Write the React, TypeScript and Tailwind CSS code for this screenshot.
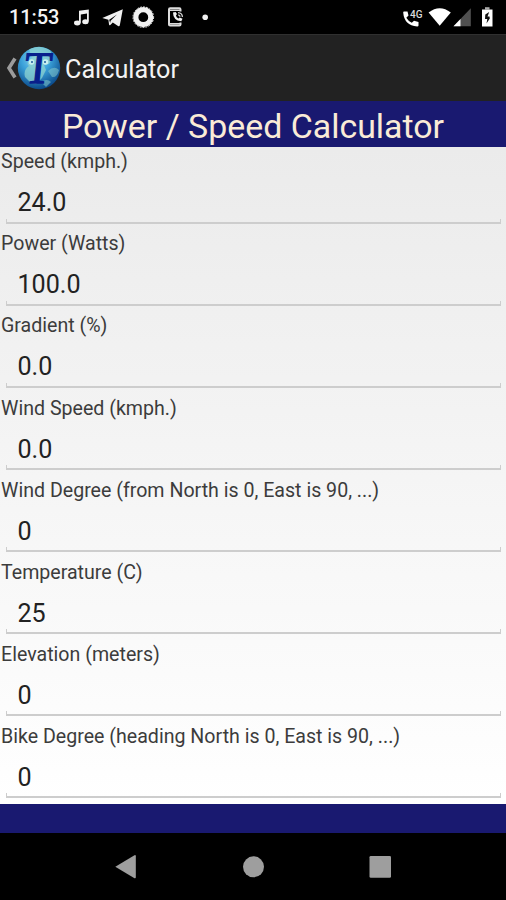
interface FieldProps {
    label: string;
    value: string;
}

const fields: FieldProps[] = [
    { label: "Speed (kmph.)", value: "24.0" },
    { label: "Power (Watts)", value: "100.0" },
    { label: "Gradient (%)", value: "0.0" },
    { label: "Wind Speed (kmph.)", value: "0.0" },
    { label: "Wind Degree (from North is 0, East is 90, ...)", value: "0" },
    { label: "Temperature (C)", value: "25" },
    { label: "Elevation (meters)", value: "0" },
    { label: "Bike Degree (heading North is 0, East is 90, ...)", value: "0" },
];

function StatusBar() {
    return (
        <div className="flex h-[34px] shrink-0 items-center bg-black text-[#f4f4f4]">
            <span className="w-[73px] pl-[9px] text-[20px] leading-[36px] font-medium tracking-[-0.1px]">11:53</span>

            {/* Notifications */}
            <svg className="h-[34px] w-[147px]" viewBox="73 0 147 34" fill="#f1f1f1">
                {/* Music */}
                <path d="M79 10.8L88.8 9.6V21.5H87V13.6L80.8 14.4V22.8H79Z" />
                <ellipse cx="77.3" cy="23" rx="3.3" ry="2.4" />
                <ellipse cx="85.4" cy="21.7" rx="3.2" ry="2.5" />
                {/* Telegram */}
                <path d="M102.3 18L122.8 9.2L119.8 25.2Q119.5 26.8 118 25.9L112.8 22.4L110.3 25Q109.2 25.8 109 24.2L108.4 19.8Z" />
                <path d="M109.2 19.8L117 14.4L110.6 20.8L110.1 23Z" fill="#000" />
                {/* Ring */}
                <circle cx="143.3" cy="17.2" r="7.5" fill="none" stroke="#f1f1f1" strokeWidth="5.2" />
                <circle cx="143.3" cy="17.2" r="10.3" fill="none" stroke="#f1f1f1" strokeWidth="1" strokeDasharray="1.8 1.2" />
                {/* Phone with call */}
                <path d="M180.5 11.5V9.4Q180.5 8.3 179.4 8.3H170.1Q169 8.3 169 9.4V24.4Q169 25.5 170.1 25.5H179.4Q180.5 25.5 180.5 24.4V22.5" fill="none" stroke="#dcdcdc" strokeWidth="2" />
                <path d="M169 10.3H180.5M169 23.8H180.5" stroke="#dcdcdc" strokeWidth="1.6" />
                <path d="M173 12.6Q173 20.6 181.3 21.3L182.5 18.8L179.8 17.4L178.4 18.5Q176.3 17.3 175.9 15.4L177 14.1L175.6 12Z" />
                <path d="M178 12.6Q182.4 12.8 182.4 17M178.2 15Q180 15.2 180 16.8" fill="none" stroke="#d0d0d0" strokeWidth="1.3" />
                <circle cx="205.2" cy="17.3" r="2.8" />
            </svg>

            {/* Network and battery */}
            <svg className="ml-auto h-[34px] w-[106px]" viewBox="400 0 106 34" fill="#fff">
                <path d="M404 11.6H407.5L408.5 15.6L406.3 17.7Q408.4 21.2 411.8 22.8L414 20.8L418.5 22V25.5Q418.5 26.6 417.2 26.6Q404.2 25.5 403.2 12.6Q403.2 11.6 404 11.6Z" />
                <text x="410" y="18" fontSize="11" fontWeight="500" textLength="12.5" lengthAdjust="spacingAndGlyphs" fill="#ddd">4G</text>
                <path d="M428.6 12.5Q439.7 4 450.8 12.5L439.7 25.8Z" />
                <path d="M470.8 8.3V26.2H453.5Z" fill="#505050" />
                <path d="M460.5 19V26.2H453.5Z" />
                <path d="M485 7.2H489.5V9.5H485Z" fill="#aaa" />
                <path d="M482 9.5H492.5V26.5H482Z" />
                <path d="M489.2 12L485.3 14.5L485 19H487.3L486.5 23.5L489.8 18.5L489.5 16.4H487.5Z" fill="#111" />
            </svg>
        </div>
    );
}

function GlobeLogo() {
    return (
        <svg className="h-[44px] w-[44px] overflow-visible" viewBox="0 0 44 44">
            <defs>
                <radialGradient id="ocean" cx="42%" cy="28%" r="75%">
                    <stop offset="0" stopColor="#8fd6f2" />
                    <stop offset=".45" stopColor="#3ba2da" />
                    <stop offset="1" stopColor="#074384" />
                </radialGradient>
                <clipPath id="globe">
                    <circle cx="22" cy="22" r="21.2" />
                </clipPath>
            </defs>
            <circle cx="22" cy="22" r="21.2" fill="url(#ocean)" />
            <g clipPath="url(#globe)" fill="#8ed2cf">
                <path d="M12 3Q23 -2 33 4L36 11L32 18L27 19L29 24L25 32L19 38L14 37L8 31Q6 24 12 20Q8 17 15 12Z" fillOpacity=".75" />
                <path d="M31 25Q37 19 42 24Q40 32 35 31Z" fillOpacity=".5" />
                <path d="M24 36Q30 32 34 36L29 41Z" fillOpacity=".5" />
            </g>
            <circle cx="14.5" cy="16" r="2.8" fill="#c8eef0" />
            <circle cx="28.5" cy="16" r="2.8" fill="#c8eef0" />
            <circle cx="15" cy="16" r="1" fill="#1d5c9c" />
            <circle cx="28" cy="16" r="1" fill="#1d5c9c" />
            <text
                x="7"
                y="37"
                fontFamily="Liberation Serif, serif"
                fontSize="45"
                textLength="27"
                lengthAdjust="spacingAndGlyphs"
                fill="#081f8c"
                stroke="#081f8c"
                strokeWidth="1.3"
                transform="translate(3.2 0) skewX(-6)"
            >
                T
            </text>
        </svg>
    );
}

function ActionBar() {
    return (
        <div className="flex h-[67px] shrink-0 items-center border-t border-[#303030] bg-[#222222] pl-[6px] text-[#f3f3f3]">
            <svg className="h-[22px] w-[11px]" viewBox="0 0 11 22" fill="none">
                <path d="M9 1.5L3 11L9 20.5" stroke="#9b9b9b" strokeWidth="3.6" />
            </svg>
            <GlobeLogo />
            <span className="ml-[4px] pt-[4px] text-[25.2px] leading-none">Calculator</span>
        </div>
    );
}

function Field({ label, value }: FieldProps) {
    return (
        <div className="flex h-[82.1px] flex-col">
            <div className="h-[29px] pl-px text-[19.6px] leading-[30px] whitespace-nowrap text-[#3c3c3c]">{label}</div>
            <div className="h-[42.4px] pl-[17.5px] text-[25.1px] leading-[54px] text-[#222]">{value}</div>
            {/* Underline with the short upright ends */}
            <div className="mr-[5px] ml-[6px] h-[5px] border-x border-b-2 border-[#cdcdcd]" />
        </div>
    );
}

function NavBar() {
    return (
        <div className="flex h-[67px] shrink-0 items-center bg-black">
            <svg className="h-[67px] w-full" viewBox="0 0 506 67" fill="#9e9e9e">
                <path d="M115.3 33.8L134.5 22.2Q135.8 21.7 135.8 23.2V44.2Q135.8 45.7 134.5 45.2Z" />
                <circle cx="253.5" cy="33.8" r="10.5" />
                <rect x="369.5" y="23" width="21.5" height="21.7" rx="1.3" />
            </svg>
        </div>
    );
}

export default function App() {
    return (
        <div className="flex h-[900px] w-[506px] flex-col overflow-hidden bg-black font-['Roboto',sans-serif]">
            <StatusBar />
            <ActionBar />

            <h1 className="h-[46px] shrink-0 bg-[#191970] text-center text-[33.9px] leading-[51px] font-normal whitespace-nowrap text-[#faebd7]">
                Power / Speed Calculator
            </h1>

            <main className="h-[657px] shrink-0 bg-gradient-to-b from-[#ebebeb] to-white pt-[0.3px]">
                {fields.map((field) => (
                    <Field key={field.label} label={field.label} value={field.value} />
                ))}
            </main>

            <div className="h-[29px] shrink-0 bg-[#191970]" />
            <NavBar />
        </div>
    );
}
